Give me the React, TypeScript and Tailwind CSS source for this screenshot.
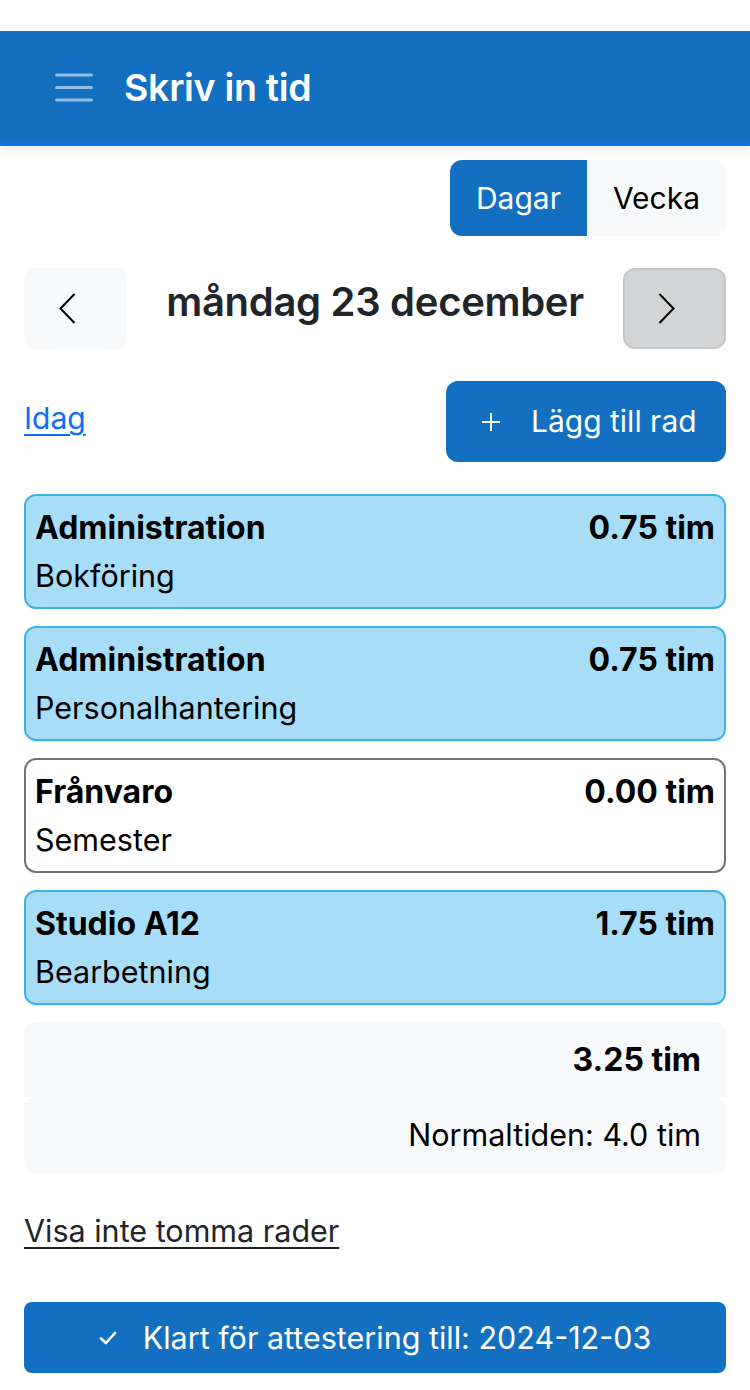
type Row = {
  project: string;
  task: string;
  hours: string;
  empty?: boolean;
};

const rows: Row[] = [
  { project: "Administration", task: "Bokföring", hours: "0.75 tim" },
  { project: "Administration", task: "Personalhantering", hours: "0.75 tim" },
  { project: "Frånvaro", task: "Semester", hours: "0.00 tim", empty: true },
  { project: "Studio A12", task: "Bearbetning", hours: "1.75 tim" },
];

function Chevron({ dir }: { dir: "left" | "right" }) {
  return (
    <svg width="17" height="31" viewBox="0 0 17 31" className="mr-[16px]">
      <polyline
        points={dir === "left" ? "15.5,1 1.5,15.5 15.5,30" : "1.5,1 15.5,15.5 1.5,30"}
        fill="none"
        stroke="#000"
        strokeWidth="2"
      />
    </svg>
  );
}

export default function App() {
  return (
    <div
      className="min-h-[1390px] bg-white text-[#212529]"
      style={{ fontFamily: "Inter, 'Liberation Sans', sans-serif" }}
    >
      <div className="h-[31px]" />
      {/* navbar */}
      <header className="flex h-[115px] items-center border-b-[3px] border-[#0d6efd] bg-[#136fc0] pl-[55px] shadow-[0_4px_8px_rgba(0,0,0,0.08)]">
        <svg width="38" height="30" viewBox="0 0 38 30" className="mt-[2px]">
          <g stroke="rgba(255,255,255,0.55)" strokeWidth="3" strokeLinecap="round">
            <line x1="1.5" y1="2" x2="36.5" y2="2" />
            <line x1="1.5" y1="14.5" x2="36.5" y2="14.5" />
            <line x1="1.5" y1="27" x2="36.5" y2="27" />
          </g>
        </svg>
        <h1 className="ml-[31px] mt-[3px] text-[37.5px] font-semibold tracking-[-0.3px] text-white">
          Skriv in tid
        </h1>
      </header>

      <main className="px-[24px]">
        {/* view toggle */}
        <div className="mt-[14px] flex justify-end">
          <div className="flex h-[76px] overflow-hidden rounded-[12px] text-[30px]">
            <button className="w-[137px] bg-[#136fc0] text-white">Dagar</button>
            <button className="w-[139px] bg-[#f8f9fa] text-black">Vecka</button>
          </div>
        </div>

        {/* date nav */}
        <div className="mt-[32px] flex h-[81px] items-center justify-between">
          <button className="flex h-[81px] w-[103px] items-center justify-center rounded-[12px] bg-[#f8f9fa]">
            <Chevron dir="left" />
          </button>
          <div className="mb-[14px] text-[40px] font-semibold tracking-[-0.3px] text-[#212529]">
            måndag 23 december
          </div>
          <button className="flex h-[81px] w-[103px] items-center justify-center rounded-[12px] border-2 border-[#c6c7c8] bg-[#d3d4d5]">
            <Chevron dir="right" />
          </button>
        </div>

        {/* today / add */}
        <div className="mt-[32px] flex items-start justify-between">
          <a href="#" className="mt-[17px] text-[30px] leading-[40px] text-[#0d6efd] underline decoration-2 underline-offset-[5px]">
            Idag
          </a>
          <button className="flex h-[81px] w-[280px] items-center rounded-[12px] bg-[#136fc0] pl-[36px] text-[30px] text-white">
            <svg width="18" height="18" viewBox="0 0 18 18">
              <g stroke="#fff" strokeWidth="2">
                <line x1="9" y1="0" x2="9" y2="18" />
                <line x1="0" y1="9" x2="18" y2="9" />
              </g>
            </svg>
            <span className="ml-[31px]">Lägg till rad</span>
          </button>
        </div>

        {/* rows */}
        <div className="mt-[32px] flex flex-col gap-[17px]">
          {rows.map((r, i) => (
            <div
              key={i}
              className={
                r.empty
                  ? "h-[115px] rounded-[12px] border-2 border-[#6c757d] bg-white px-[9px] py-[8px] text-black"
                  : "h-[115px] rounded-[12px] border-2 border-[#3cb4e7] bg-[#a8ddf7] px-[9px] py-[8px] text-black"
              }
            >
              <div className="flex justify-between text-[32px] font-bold leading-[48px]">
                <span>{r.project}</span>
                <span>{r.hours}</span>
              </div>
              <div className="text-[30.5px] leading-[48px]">{r.task}</div>
            </div>
          ))}
        </div>

        {/* summary */}
        <div className="mt-[17px] flex h-[75px] items-center justify-end rounded-t-[12px] bg-[#f8f9fa] pr-[25px] text-[32px] font-bold text-black">
          3.25 tim
        </div>
        <div className="flex h-[76px] items-center justify-end rounded-[12px] bg-[#f8f9fa] pr-[25px] text-[30.5px] text-black">
          Normaltiden: 4.0 tim
        </div>

        <a href="#" className="mt-[38px] inline-block text-[30.5px] leading-[40px] text-[#212529] underline decoration-2 underline-offset-[5px]">
          Visa inte tomma rader
        </a>

        <button className="mt-[51px] flex h-[71px] w-full items-center justify-center rounded-[8px] bg-[#136fc0] text-[30.5px] text-white">
          <svg width="18" height="14" viewBox="0 0 18 14">
            <path d="M2 7.5 L7 12 L16 2" fill="none" stroke="#fff" strokeWidth="2.6" strokeLinecap="round" strokeLinejoin="round" />
          </svg>
          <span className="ml-[26px]">Klart för attestering till: 2024-12-03</span>
        </button>
      </main>
    </div>
  );
}
